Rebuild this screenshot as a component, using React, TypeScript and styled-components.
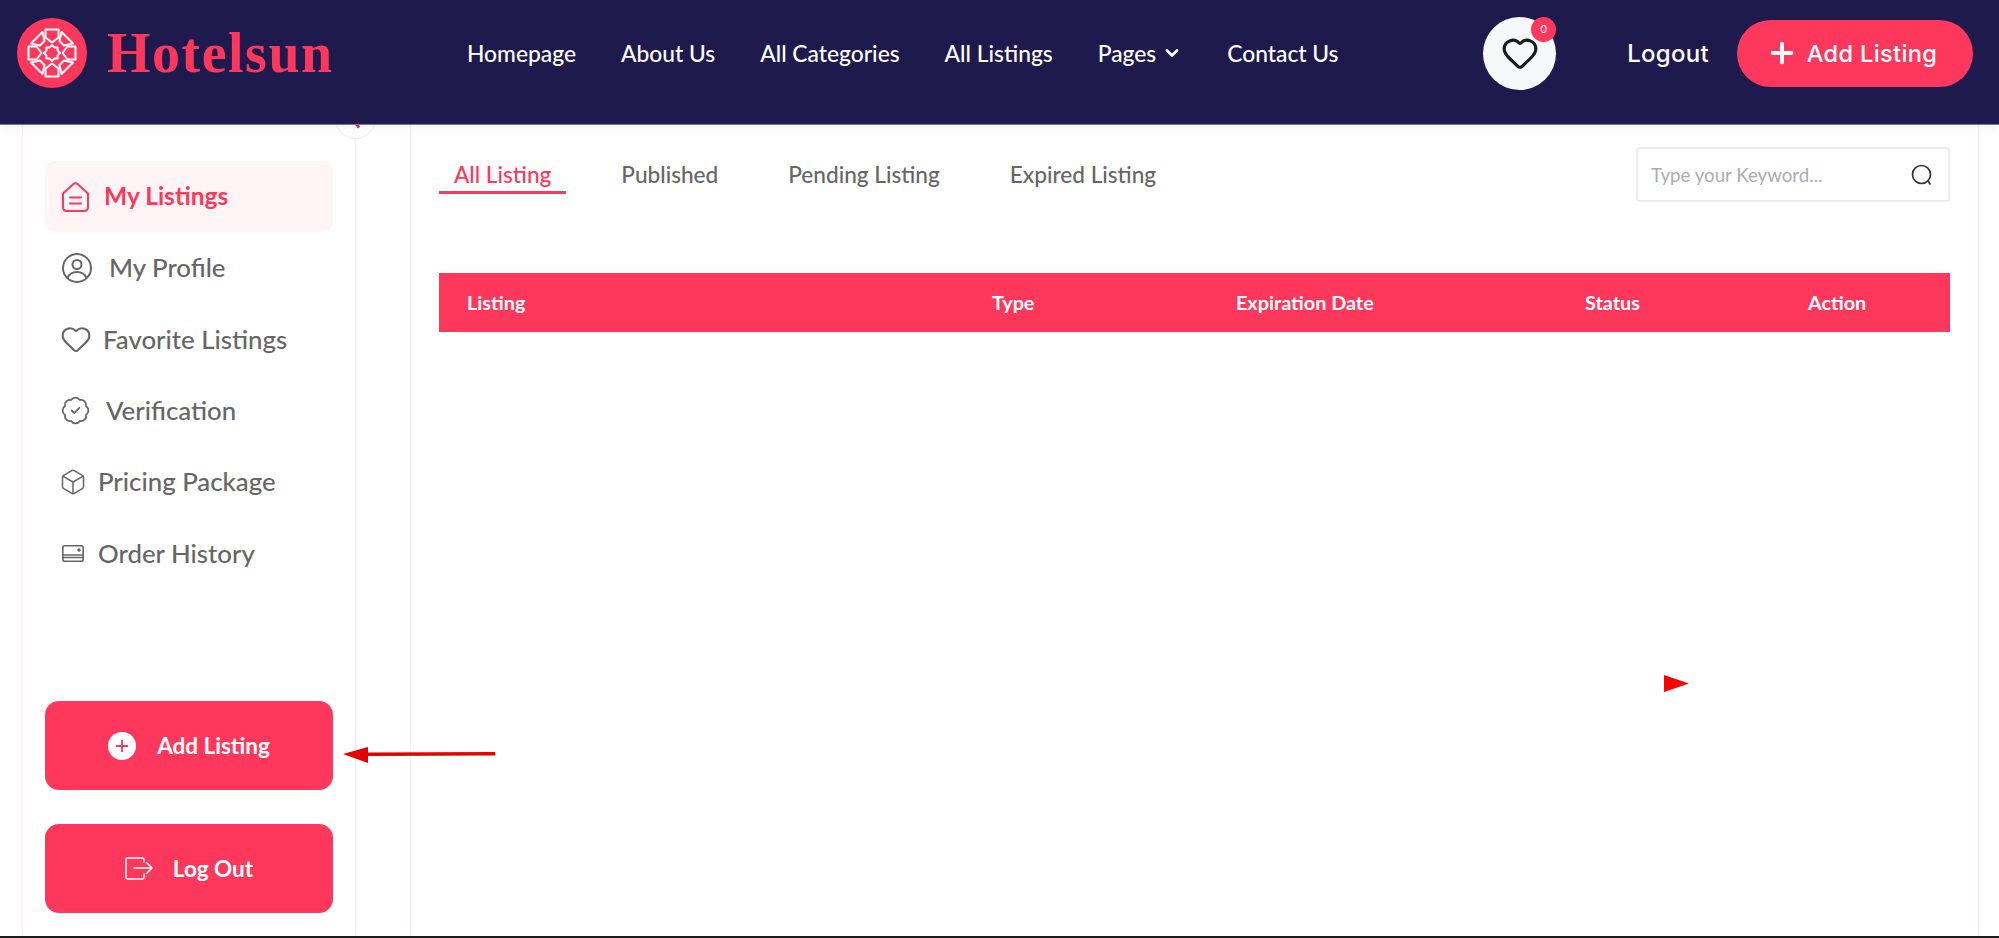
import React from "react";
import styled, { createGlobalStyle } from "styled-components";
import { BadgeCheck, Box, ChevronDown, Heart, Plus } from "lucide-react";

const ROSE = "#fe385c";
const NAVY = "#1f1a4d";
const LINE = "#fbeff2";
const BODY_FONT = `Lato, "Open Sans", sans-serif`;

const GlobalStyle = createGlobalStyle`
  html, body {
    margin: 0;
    padding: 0;
    background: #fff;
    font-family: ${BODY_FONT};
  }
  * { box-sizing: border-box; }
`;

const Page = styled.div`
  position: relative;
  display: flex;
  flex-direction: column;
  height: 938px;
  overflow: hidden;
  background: #fff;
`;

const Header = styled.header`
  position: relative;
  z-index: 2;
  flex: none;
  display: flex;
  align-items: center;
  height: 124px;
  padding: 0 26px 18px 17px;
  background: ${NAVY};
  box-shadow: 0 1px 0 #77739a, 0 3px 10px rgba(0, 0, 0, 0.06);
`;

const Brand = styled.a`
  display: flex;
  align-items: center;
  gap: 20px;
  width: 450px;
`;

const BrandName = styled.span`
  font-family: "Liberation Serif", serif;
  font-weight: 700;
  font-size: 56px;
  line-height: 1;
  letter-spacing: 1.5px;
  color: ${ROSE};
`;

const MainNav = styled.nav`
  display: flex;
  align-items: center;
  gap: 45px;
`;

const NavLink = styled.a`
  display: flex;
  align-items: center;
  gap: 6px;
  font-size: 22.8px;
  font-weight: 500;
  color: #fff;
  white-space: nowrap;
`;

const HeaderActions = styled.div`
  margin-left: auto;
  display: flex;
  align-items: center;
`;

const WishButton = styled.button`
  position: relative;
  display: flex;
  align-items: center;
  justify-content: center;
  width: 73px;
  height: 73px;
  margin-right: 71px;
  padding: 0;
  border: 0;
  border-radius: 50%;
  background: #f7f8fa;
  color: #1a1a1a;
`;

const WishBadge = styled.span`
  position: absolute;
  top: 0;
  right: 0;
  display: flex;
  align-items: center;
  justify-content: center;
  width: 25px;
  height: 25px;
  border-radius: 50%;
  background: ${ROSE};
  color: #fff;
  font-family: Inter, sans-serif;
  font-size: 11px;
`;

const LogoutLink = styled.a`
  margin-right: 28px;
  font-family: Inter, sans-serif;
  font-size: 24px;
  font-weight: 500;
  letter-spacing: 0.3px;
  color: #fff;
`;

const AddButton = styled.button`
  display: flex;
  align-items: center;
  justify-content: center;
  gap: 14px;
  width: 236px;
  height: 67px;
  padding: 0 2px 0 0;
  border: 0;
  border-radius: 34px;
  background: ${ROSE};
  color: #fff;
  font-family: Inter, sans-serif;
  font-size: 23.5px;
  font-weight: 500;
  letter-spacing: 0.4px;
`;

const Trim = styled.span<{ $x: number }>`
  display: flex;
  margin: 0 -${(p) => p.$x}px;
`;

const Content = styled.div`
  flex: 1;
  display: flex;
  min-height: 0;
  padding-left: 22px;
`;

const Sidebar = styled.aside`
  position: relative;
  flex: none;
  display: flex;
  flex-direction: column;
  width: 334px;
  padding: 37px 22px 23px;
  border-left: 1px solid ${LINE};
  border-right: 1px solid ${LINE};
`;

const CollapseToggle = styled.span`
  position: absolute;
  top: -26px;
  right: -21px;
  width: 41px;
  height: 41px;
  border: 1px solid #ececec;
  border-radius: 50%;
  background: #fff;
  &::after {
    content: "";
    position: absolute;
    left: 20px;
    top: 24px;
    width: 3px;
    height: 5px;
    background: #d92a5c;
    transform: rotate(-35deg);
  }
`;

const SideList = styled.ul`
  display: grid;
  grid-auto-rows: 71.4px;
  margin: 0;
  padding: 0;
  list-style: none;
`;

const SideItem = styled.li<{ $active?: boolean; $gap: number }>`
  display: flex;
  align-items: center;
  gap: ${(p) => p.$gap}px;
  padding-left: 17px;
  border-radius: 10px;
  background: ${(p) => (p.$active ? "#fff4f6" : "transparent")};
  color: ${(p) => (p.$active ? ROSE : "#666666")};
  font-size: ${(p) => (p.$active ? 24.5 : 25.8)}px;
  font-weight: ${(p) => (p.$active ? 700 : 500)};
  line-height: 1;
`;

const SideActions = styled.div`
  margin-top: auto;
  display: flex;
  flex-direction: column;
  gap: 34px;
`;

const SideButton = styled.button<{ $gap: number }>`
  display: flex;
  align-items: center;
  justify-content: center;
  gap: ${(p) => p.$gap}px;
  height: 89px;
  border: 0;
  border-radius: 14px;
  background: ${ROSE};
  color: #fff;
  font-family: ${BODY_FONT};
  font-size: 22.5px;
  font-weight: 700;
`;

const Main = styled.main`
  flex: none;
  width: 1569px;
  margin-left: 54px;
  padding: 23px 28px 0;
  border-left: 1px solid ${LINE};
  border-right: 1px solid ${LINE};
`;

const TabBar = styled.div`
  display: flex;
  align-items: center;
  justify-content: space-between;
`;

const Tabs = styled.div`
  display: flex;
  gap: 40px;
`;

const Tab = styled.a<{ $active?: boolean }>`
  padding: 5px 15px 2px;
  border-bottom: 3px solid ${(p) => (p.$active ? ROSE : "transparent")};
  color: ${(p) => (p.$active ? ROSE : "#666666")};
  font-size: 22.6px;
  font-weight: 500;
  line-height: 28px;
  white-space: nowrap;
`;

const SearchBox = styled.label`
  display: flex;
  align-items: center;
  width: 314px;
  height: 55px;
  padding: 0 14px 0 13px;
  border: 2px solid #ececef;
  border-radius: 4px;
  color: #333;
`;

const SearchInput = styled.input`
  flex: 1;
  min-width: 0;
  padding: 0;
  border: 0;
  outline: 0;
  font-family: ${BODY_FONT};
  font-size: 18.7px;
  color: #333;
  &::placeholder {
    color: #a9abb3;
    opacity: 1;
  }
`;

const TableHead = styled.div`
  display: grid;
  grid-template-columns: 525px 244px 349px 223px 1fr;
  align-items: center;
  height: 59px;
  margin-top: 71px;
  padding: 0 0 1px 28px;
  background: ${ROSE};
  color: #fff;
  font-size: 19.8px;
  font-weight: 700;
`;

const BottomRule = styled.div`
  flex: none;
  height: 2px;
  background: #1c1c1c;
`;

const Annotation = styled.svg`
  position: absolute;
  z-index: 3;
`;

const ArrowMark = styled(Annotation)`
  left: 343px;
  top: 745px;
`;

const PointerMark = styled(Annotation)`
  left: 1664px;
  top: 675px;
`;

const Logo = () => (
  <svg width="70" height="70" viewBox="-35 -35 70 70">
    <circle r="35" fill={ROSE} />
    <g fill="none" stroke="#fff" strokeWidth="2" strokeLinejoin="round">
      {[0, 90, 180, 270].map((a) => (
        <g key={a} transform={`rotate(${a})`}>
          <path d="M-6.5 -23.5H6.5V-15.5L0 -10.5L-6.5 -15.5Z" />
          <path d="M9.5 -21L21 -9.5L12 -7.5L7.5 -12Z" />
        </g>
      ))}
      <path d="M0 -8L2.4 -5.6H5.6V-2.4L8 0L5.6 2.4V5.6H2.4L0 8L-2.4 5.6H-5.6V2.4L-8 0L-5.6 -2.4V-5.6H-2.4Z" />
    </g>
  </svg>
);

const ListingsIcon = () => (
  <svg width="27" height="30" viewBox="0 0 27 30" fill="none" stroke="currentColor" strokeWidth="2" strokeLinecap="round" strokeLinejoin="round">
    <path d="M1 11.5L11.5 2Q13.5 0.6 15.5 2L26 11.5V25Q26 29 22 29H5Q1 29 1 25Z" />
    <path d="M8 15.5H19M8 21.5H19" />
  </svg>
);

const ProfileIcon = () => (
  <svg width="30" height="30" viewBox="0 0 30 30" fill="none" stroke="currentColor" strokeWidth="2">
    <circle cx="15" cy="15" r="14" />
    <circle cx="15" cy="11.5" r="4.5" />
    <path d="M5.5 25Q8 19 15 19T24.5 25" />
  </svg>
);

const WalletIcon = () => (
  <svg width="22" height="17" viewBox="0 0 22 17" fill="none" stroke="currentColor" strokeWidth="1.6">
    <rect x="0.8" y="0.8" width="20.4" height="15.4" rx="2" />
    <path d="M1 10H21M1 12.5H21" />
    <circle cx="17" cy="5" r="1" fill="currentColor" />
  </svg>
);

const CircleAddIcon = () => (
  <svg width="28" height="28" viewBox="0 0 28 28">
    <circle cx="14" cy="14" r="14" fill="#fff" />
    <path d="M14 8V20M8 14H20" stroke={ROSE} strokeWidth="1.8" />
  </svg>
);

const LogOutIcon = () => (
  <svg width="28" height="23" viewBox="0 0 28 23" fill="none" stroke="currentColor" strokeWidth="1.5" strokeLinecap="round" strokeLinejoin="round">
    <path d="M19 5V2.5Q19 1 17.5 1H2.5Q1 1 1 2.5V20.5Q1 22 2.5 22H17.5Q19 22 19 20.5V17" />
    <path d="M9 11H27M21.5 5.5L27 11L21.5 16.5" />
  </svg>
);

const SearchIcon = () => (
  <svg width="24" height="24" viewBox="0 0 24 24" fill="none" stroke="currentColor" strokeWidth="1.7" strokeLinecap="round">
    <circle cx="11.5" cy="11.5" r="9" />
    <path d="M18.5 18.5L20 21" />
  </svg>
);

const menu = [
  { label: "My Listings", icon: <ListingsIcon />, gap: 15, active: true },
  { label: "My Profile", icon: <ProfileIcon />, gap: 17 },
  { label: "Favorite Listings", icon: <Trim $x={2.5}><Heart size={32} strokeWidth={1.6} /></Trim>, gap: 14 },
  { label: "Verification", icon: <Trim $x={2}><BadgeCheck size={31} strokeWidth={1.4} /></Trim>, gap: 17 },
  { label: "Pricing Package", icon: <Trim $x={3}><Box size={28} strokeWidth={1.3} /></Trim>, gap: 14 },
  { label: "Order History", icon: <WalletIcon />, gap: 14 },
];

const App = () => (
  <Page>
    <GlobalStyle />
    <Header>
      <Brand>
        <Logo />
        <BrandName>Hotelsun</BrandName>
      </Brand>
      <MainNav>
        <NavLink>Homepage</NavLink>
        <NavLink>About Us</NavLink>
        <NavLink>All Categories</NavLink>
        <NavLink>All Listings</NavLink>
        <NavLink>
          Pages <ChevronDown size={20} strokeWidth={3.2} />
        </NavLink>
        <NavLink>Contact Us</NavLink>
      </MainNav>
      <HeaderActions>
        <WishButton aria-label="Wishlist">
          <Heart size={38} strokeWidth={2} />
          <WishBadge>0</WishBadge>
        </WishButton>
        <LogoutLink>Logout</LogoutLink>
        <AddButton>
          <Trim $x={5}><Plus size={32} strokeWidth={3} /></Trim>
          Add Listing
        </AddButton>
      </HeaderActions>
    </Header>
    <Content>
      <Sidebar>
        <CollapseToggle />
        <SideList>
          {menu.map((item) => (
            <SideItem key={item.label} $active={item.active} $gap={item.gap}>
              {item.icon}
              {item.label}
            </SideItem>
          ))}
        </SideList>
        <SideActions>
          <SideButton $gap={21}>
            <CircleAddIcon />
            Add Listing
          </SideButton>
          <SideButton $gap={20}>
            <LogOutIcon />
            Log Out
          </SideButton>
        </SideActions>
      </Sidebar>
      <Main>
        <TabBar>
          <Tabs>
            <Tab $active>All Listing</Tab>
            <Tab>Published</Tab>
            <Tab>Pending Listing</Tab>
            <Tab>Expired Listing</Tab>
          </Tabs>
          <SearchBox>
            <SearchInput placeholder="Type your Keyword..." />
            <SearchIcon />
          </SearchBox>
        </TabBar>
        <TableHead>
          <span>Listing</span>
          <span>Type</span>
          <span>Expiration Date</span>
          <span>Status</span>
          <span>Action</span>
        </TableHead>
      </Main>
    </Content>
    <BottomRule />
    <ArrowMark width="153" height="20" viewBox="0 0 153 20">
      <path d="M0 9L25 2V7.5L152 7Q153 9 152 10.5L25 11V18Z" fill="#e60000" />
    </ArrowMark>
    <PointerMark width="25" height="17" viewBox="0 0 25 17">
      <path d="M0 0L25 8.5L0 17Z" fill="#ff0000" />
    </PointerMark>
  </Page>
);

export default App;
